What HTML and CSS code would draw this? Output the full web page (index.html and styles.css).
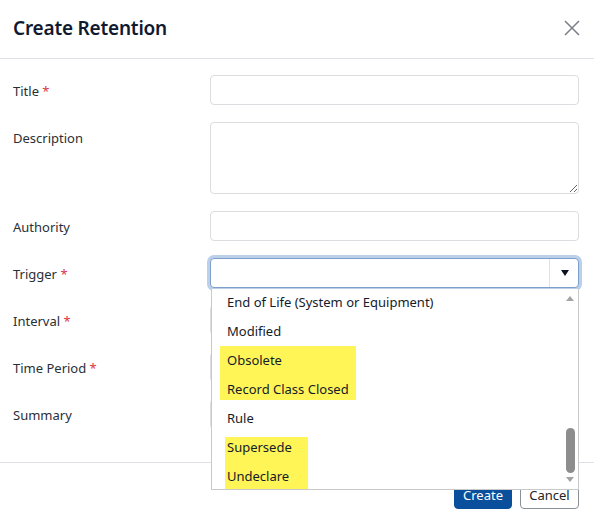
FILE: index.html
```html
<!DOCTYPE html>
<html>
<head>
<meta charset="utf-8">
<link rel="stylesheet" href="styles.css">
</head>
<body>
<div class="modal">
  <div class="header">
    <h1 class="title">Create Retention</h1>
    <button class="close" aria-label="Close">
      <svg width="16" height="16" viewBox="0 0 16 16"><path d="M1 1L15 15M15 1L1 15" stroke="#7a7f87" stroke-width="1.5" fill="none"/></svg>
    </button>
  </div>
  <div class="body">
    <div class="row">
      <label class="label">Title <span class="req">*</span></label>
      <input class="input" type="text">
    </div>
    <div class="row">
      <label class="label">Description</label>
      <textarea class="input textarea"></textarea>
    </div>
    <div class="row">
      <label class="label">Authority</label>
      <input class="input" type="text">
    </div>
    <div class="row">
      <label class="label">Trigger <span class="req">*</span></label>
      <div class="select-wrap">
        <div class="select">
          <span class="select-value"></span>
          <span class="select-btn"><span class="caret"></span></span>
        </div>
        <div class="dropdown">
          <div class="options">
            <div class="opt">End of Life (System or Equipment)</div>
            <div class="opt">Modified</div>
            <div class="hl hl-a">
              <div class="opt">Obsolete</div>
              <div class="opt">Record Class Closed</div>
            </div>
            <div class="opt">Rule</div>
            <div class="hl hl-b">
              <div class="opt">Supersede</div>
              <div class="opt">Undeclare</div>
            </div>
          </div>
          <div class="scrollbar">
            <span class="arrow up"></span>
            <div class="track"><div class="thumb"></div></div>
            <span class="arrow down"></span>
          </div>
        </div>
      </div>
    </div>
    <div class="row">
      <label class="label">Interval <span class="req">*</span></label>
      <input class="input" type="text">
    </div>
    <div class="row">
      <label class="label">Time Period <span class="req">*</span></label>
      <input class="input" type="text">
    </div>
    <div class="row">
      <label class="label">Summary</label>
      <input class="input" type="text">
    </div>
  </div>
  <div class="footer">
    <button class="btn btn-primary">Create</button>
    <button class="btn btn-secondary">Cancel</button>
  </div>
</div>
</body>
</html>
```

FILE: styles.css
```css
* { box-sizing: border-box; }
html, body { margin: 0; padding: 0; background: #fff; }
body {
  font-family: "Noto Sans", "Open Sans", sans-serif;
  font-size: 13px;
  color: #212529;
  width: 594px;
  height: 526px;
  overflow: hidden;
}
.modal { display: flex; flex-direction: column; }
.header {
  height: 59px;
  border-bottom: 1px solid #dee2e6;
  padding: 0 13px 0 13px;
  display: flex;
  align-items: center;
  justify-content: space-between;
}
.title {
  margin: 0;
  font-size: 19px;
  font-weight: 600;
  letter-spacing: -0.2px;
  color: #0f1a30;
  line-height: 1;
  padding-bottom: 1px;
}
.close {
  border: 0;
  background: none;
  padding: 0;
  margin-right: 1px;
  margin-bottom: 2px;
  width: 16px;
  height: 16px;
  display: flex;
}
.body {
  padding: 16px 15px 33px 13px;
  display: flex;
  flex-direction: column;
  gap: 17px;
}
.row {
  display: grid;
  grid-template-columns: 197px 369px;
  align-items: start;
}
.label {
  display: block;
  height: 30px;
  line-height: 32px;
  color: #2a2f36;
}
.req { color: #dc3545; }
.input {
  display: block;
  width: 369px;
  height: 30px;
  border: 1px solid #dcdde1;
  border-radius: 4px;
  background: #fff;
  font: inherit;
  margin: 0;
  outline: none;
}
.textarea { height: 72px; resize: vertical; }
.select-wrap { position: relative; }
.select {
  height: 30px;
  border: 1px solid #7d9fcc;
  border-radius: 4px;
  box-shadow: 0 0 0 3px #bcd0ea;
  display: flex;
  background: #fff;
}
.select-value { flex: 1; }
.select-btn {
  width: 29px;
  border-left: 1px solid #e2e2e2;
  display: flex;
  align-items: center;
  justify-content: center;
}
.caret {
  width: 0; height: 0;
  border-left: 4.5px solid transparent;
  border-right: 4.5px solid transparent;
  border-top: 6px solid #0c1424;
  margin-left: 1px;
}
.dropdown {
  position: absolute;
  top: 31px;
  left: 1px;
  width: 368px;
  height: 201px;
  background: #fff;
  border: 1px solid #c9c9c9;
  border-top: 0;
  z-index: 5;
  display: flex;
  overflow: hidden;
}
.options {
  flex: 1;
  overflow: hidden;
  margin-top: -1px;
}
.opt {
  height: 29px;
  line-height: 29px;
  padding-left: 15px;
  color: #141b2b;
  white-space: nowrap;
  position: relative;
  z-index: 1;
}
.hl { position: relative; }
.hl::before {
  content: "";
  position: absolute;
  background: #fff556;
  z-index: 0;
}
.hl-a::before { left: 8px; width: 136px; top: 0; bottom: 4px; }
.hl-b::before { left: 13px; width: 83px; top: 4px; bottom: 1px; }
.scrollbar {
  width: 14px;
  margin-right: 1px;
  display: flex;
  flex-direction: column;
  align-items: center;
  background: #fff;
}
.arrow { width: 0; height: 0; display: block; }
.arrow.up {
  margin-top: 7px;
  border-left: 4.5px solid transparent;
  border-right: 4.5px solid transparent;
  border-bottom: 5px solid #a3a3a3;
}
.arrow.down {
  margin-bottom: 7px;
  border-left: 4.5px solid transparent;
  border-right: 4.5px solid transparent;
  border-top: 5px solid #a3a3a3;
}
.track {
  flex: 1;
  width: 100%;
  display: flex;
  flex-direction: column;
  justify-content: flex-end;
  align-items: center;
  padding-bottom: 4px;
}
.thumb {
  width: 9px;
  height: 45px;
  border-radius: 5px;
  background: #8d8d8d;
}
.footer {
  border-top: 1px solid #dee2e6;
  padding: 18px 15px 0 0;
  display: flex;
  justify-content: flex-end;
  gap: 8px;
}
.btn {
  font: inherit;
  height: 28px;
  border-radius: 4px;
  padding: 0 8px;
  margin: 0;
}
.btn-primary {
  background: #0a4f9b;
  color: #fff;
  border: 1px solid #0a4f9b;
  width: 58px;
}
.btn-secondary {
  background: #fff;
  color: #212529;
  border: 1px solid #8a9099;
  width: 59px;
}
```
